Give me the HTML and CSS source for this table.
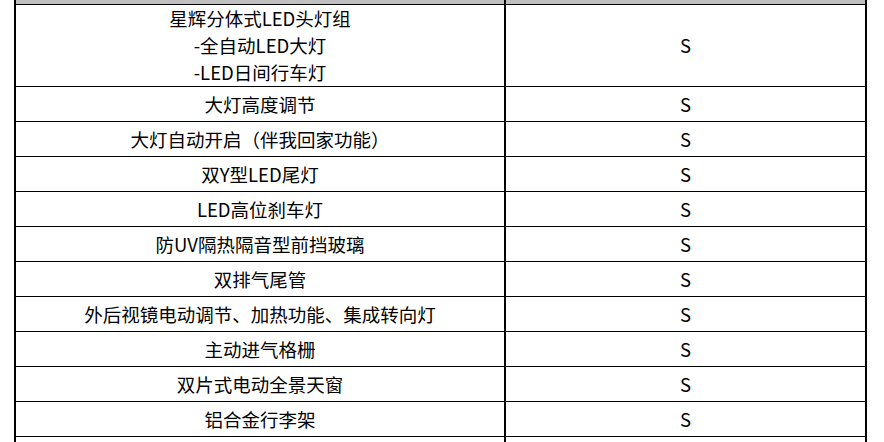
FILE: index.html
```html
<!DOCTYPE html>
<html lang="zh-CN">
<head>
<meta charset="utf-8">
<title>配置表</title>
<link rel="stylesheet" href="styles.css">
</head>
<body>
<div class="sheet">
  <div class="row head"><div class="cell name"></div><div class="cell val"></div></div>
  <div class="row tall">
    <div class="cell name multi"><span>星辉分体式LED头灯组</span><span>-全自动LED大灯</span><span>-LED日间行车灯</span></div>
    <div class="cell val">S</div>
  </div>
  <div class="row"><div class="cell name">大灯高度调节</div><div class="cell val">S</div></div>
  <div class="row"><div class="cell name">大灯自动开启（伴我回家功能）</div><div class="cell val">S</div></div>
  <div class="row"><div class="cell name">双Y型LED尾灯</div><div class="cell val">S</div></div>
  <div class="row"><div class="cell name">LED高位刹车灯</div><div class="cell val">S</div></div>
  <div class="row"><div class="cell name">防UV隔热隔音型前挡玻璃</div><div class="cell val">S</div></div>
  <div class="row"><div class="cell name">双排气尾管</div><div class="cell val">S</div></div>
  <div class="row"><div class="cell name">外后视镜电动调节、加热功能、集成转向灯</div><div class="cell val">S</div></div>
  <div class="row"><div class="cell name">主动进气格栅</div><div class="cell val">S</div></div>
  <div class="row"><div class="cell name">双片式电动全景天窗</div><div class="cell val">S</div></div>
  <div class="row"><div class="cell name">铝合金行李架</div><div class="cell val">S</div></div>
  <div class="row"><div class="cell name"></div><div class="cell val"></div></div>
</div>
</body>
</html>
```
FILE: styles.css
```css
html, body {
  margin: 0;
  padding: 0;
  background: #fff;
}
body {
  width: 884px;
  height: 442px;
  overflow: hidden;
  font-family: "Noto Sans CJK SC", "Noto Sans", sans-serif;
  font-size: 18.5px;
  color: #000;
}
.sheet {
  margin-left: 14px;
  width: 853px;
  box-sizing: border-box;
  border-left: 2px solid #000;
  border-right: 2px solid #000;
}
.row {
  display: grid;
  grid-template-columns: 490px 359px;
  height: 34px;
  border-bottom: 1px solid #000;
}
.row.head {
  height: 4px;
  background: #c0c0c0;
}
.row.tall {
  height: 81px;
}
.cell {
  display: flex;
  align-items: center;
  justify-content: center;
  line-height: 27px;
  white-space: nowrap;
}
.cell.name {
  border-right: 2px solid #000;
}
.cell.multi {
  flex-direction: column;
}
.cell.multi span {
  display: block;
}
```
